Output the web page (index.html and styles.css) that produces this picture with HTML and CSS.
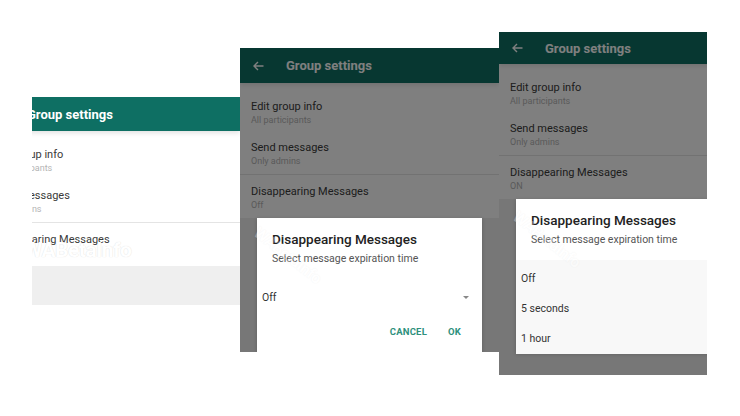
FILE: index.html
```html
<!DOCTYPE html>
<html lang="en">
<head>
  <meta charset="UTF-8" />
  <title>Group settings — Disappearing Messages</title>
  <link rel="stylesheet" href="styles.css">
</head>
<body>
  <div class="stage">

    <!-- shot 1: plain settings screen, cropped on the left -->
    <section class="shot shot-1">
      <div class="screen">
        <header class="appbar">
          <span class="back"><svg width="11" height="10" viewBox="0 0 11 10"><path d="M10.5 5H1.2M5 1L1 5l4 4" fill="none" stroke="currentColor" stroke-width="1.4"/></svg></span>
          <span class="title">Group settings</span>
        </header>
        <div class="group group-main">
          <div class="row"><div class="row-title">Edit group info</div><div class="row-sub">All participants</div></div>
          <div class="row"><div class="row-title">Send messages</div><div class="row-sub">Only admins</div></div>
        </div>
        <div class="group group-last">
          <div class="row"><div class="row-title">Disappearing Messages</div><div class="row-sub">Off</div></div>
        </div>
        <div class="filler"></div>
      </div>
      <span class="watermark">WABetaInfo</span>
    </section>

    <!-- shot 2: dialog with spinner -->
    <section class="shot shot-2 dimmed">
      <div class="screen">
        <header class="appbar">
          <span class="back"><svg width="11" height="10" viewBox="0 0 11 10"><path d="M10.5 5H1.2M5 1L1 5l4 4" fill="none" stroke="currentColor" stroke-width="1.4"/></svg></span>
          <span class="title">Group settings</span>
        </header>
        <div class="group group-main">
          <div class="row"><div class="row-title">Edit group info</div><div class="row-sub">All participants</div></div>
          <div class="row"><div class="row-title">Send messages</div><div class="row-sub">Only admins</div></div>
        </div>
        <div class="group group-last">
          <div class="row"><div class="row-title">Disappearing Messages</div><div class="row-sub">Off</div></div>
        </div>
        <div class="filler"></div>
      </div>
      <span class="watermark tilted">WABetaInfo</span>
      <div class="dialog dialog-spinner">
        <div class="dialog-title">Disappearing Messages</div>
        <div class="dialog-text">Select message expiration time</div>
        <div class="spinner"><span>Off</span><span class="caret"></span></div>
        <div class="actions"><span>CANCEL</span><span>OK</span></div>
      </div>
    </section>

    <!-- shot 3: dialog with open list -->
    <section class="shot shot-3 dimmed">
      <div class="screen">
        <header class="appbar">
          <span class="back"><svg width="11" height="10" viewBox="0 0 11 10"><path d="M10.5 5H1.2M5 1L1 5l4 4" fill="none" stroke="currentColor" stroke-width="1.4"/></svg></span>
          <span class="title">Group settings</span>
        </header>
        <div class="group group-main">
          <div class="row"><div class="row-title">Edit group info</div><div class="row-sub">All participants</div></div>
          <div class="row"><div class="row-title">Send messages</div><div class="row-sub">Only admins</div></div>
        </div>
        <div class="group group-last">
          <div class="row"><div class="row-title">Disappearing Messages</div><div class="row-sub">ON</div></div>
        </div>
        <div class="filler"></div>
      </div>
      <span class="watermark tilted">WABetaInfo</span>
      <div class="dialog dialog-list">
        <div class="dialog-title">Disappearing Messages</div>
        <div class="dialog-text">Select message expiration time</div>
        <ul class="options">
          <li>Off</li>
          <li>5 seconds</li>
          <li>1 hour</li>
        </ul>
      </div>
    </section>

  </div>
</body>
</html>
```

FILE: styles.css
```css
body {
  margin: 0;
  background: #fff;
  font-family: Roboto, "Liberation Sans", sans-serif;
  color: #333;
}
.stage {
  position: relative;
  width: 740px;
  height: 416px;
  overflow: hidden;
}

/* each phone screenshot sits on a free canvas */
.shot {
  position: absolute;
  overflow: hidden;
  background: #fff;
}
.shot-1 { left: 32px; top: 97px; width: 208px; height: 208px; }
.shot-2 { left: 240px; top: 48px; width: 259px; height: 304px; }
.shot-3 { left: 499px; top: 32px; width: 208px; height: 343px; }

.screen {
  width: 259px;
  height: 100%;
  display: flex;
  flex-direction: column;
}
.shot-1 .screen { margin-left: -51px; }

.appbar {
  flex: none;
  height: 34px;
  display: flex;
  align-items: center;
  background: #0e6f63;
  color: #fff;
  box-shadow: 0 2px 5px rgba(0, 0, 0, 0.12);
  position: relative;
}
.shot-2 .appbar { height: 35px; }
.shot-3 .appbar { height: 32px; }
.back {
  width: 46px;
  padding-left: 13px;
  box-sizing: border-box;
  display: flex;
}
.title {
  font-size: 13px;
  font-weight: 700;
}

.group { background: #fff; }
.group-main { padding: 4px 0 5px; }
.group-last {
  border-top: 1px solid #e4e4e4;
  padding-bottom: 5px;
}
.row {
  padding: 13px 11px 2px;
  white-space: nowrap;
}
.group-last .row { padding-top: 10px; }
.row-title {
  font-size: 11px;
  line-height: 14px;
  color: #3a3a3a;
}
.row-sub {
  font-size: 9px;
  line-height: 12px;
  color: #b4b4b4;
}
.filler {
  flex: 1;
  background: #efefef;
}

/* scrim behind the dialogs */
.dimmed::after {
  content: "";
  position: absolute;
  inset: 0;
  background: rgba(0, 0, 0, 0.5);
}

.watermark {
  position: absolute;
  left: -8px;
  top: 141px;
  font-size: 21px;
  font-weight: 700;
  color: #fff;
  text-shadow: 0 0 1px rgba(0, 0, 0, 0.16);
  letter-spacing: -0.5px;
  z-index: 3;
}
.watermark.tilted {
  left: 22px;
  top: 175px;
  font-size: 16px;
  opacity: 0.3;
  transform: rotate(38deg);
  transform-origin: left top;
}

.dialog {
  position: absolute;
  left: 17px;
  width: 225px;
  background: #fff;
  z-index: 2;
  box-shadow: 0 1px 4px rgba(0, 0, 0, 0.2);
}
.dialog-spinner { top: 170px; height: 134px; }
.dialog-list { top: 167px; height: 154px; display: flex; flex-direction: column; }

.dialog-title {
  padding: 13px 15px 0;
  font-size: 13.5px;
  line-height: 16px;
  font-weight: 500;
  color: #222;
  white-space: nowrap;
}
.dialog-text {
  margin-top: 5px;
  padding: 0 15px;
  font-size: 10.5px;
  line-height: 14px;
  color: #555;
  white-space: nowrap;
}
.spinner {
  margin-top: 21px;
  padding: 0 13px 0 5px;
  height: 20px;
  display: flex;
  align-items: center;
  justify-content: space-between;
  font-size: 10.5px;
  color: #333;
}
.caret {
  width: 0;
  height: 0;
  border-left: 3px solid transparent;
  border-right: 3px solid transparent;
  border-top: 3px solid #888;
}
.actions {
  margin-top: 18px;
  padding-right: 21px;
  display: flex;
  justify-content: flex-end;
  gap: 21px;
  font-size: 9.5px;
  line-height: 14px;
  font-weight: 700;
  color: #2e907c;
  letter-spacing: 0.2px;
}

.options {
  list-style: none;
  margin: 13px 0 0;
  padding: 4px 0 0;
  flex: 1;
  background: #f8f8f8;
}
.options li {
  height: 30px;
  line-height: 30px;
  padding-left: 5px;
  font-size: 10.5px;
  color: #333;
}
```
